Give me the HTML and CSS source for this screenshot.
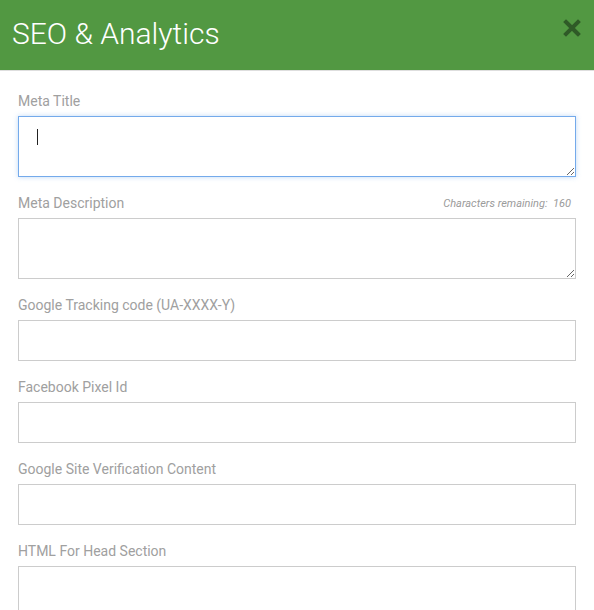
FILE: index.html
```html
<!DOCTYPE html>
<html lang="en">
<head>
    <meta charset="UTF-8">
    <meta name="viewport" content="width=device-width, initial-scale=1.0">
    <title>SEO &amp; Analytics</title>
    <link rel="stylesheet" href="styles.css">
</head>
<body>
    <header class="modal-header">
        <h1 class="modal-title">SEO &amp; Analytics</h1>
        <button class="close-btn" aria-label="Close">
            <svg width="18" height="18" viewBox="0 0 18 18">
                <path d="M3 3 L15 15 M15 3 L3 15" stroke="#2f5a27" stroke-width="4" stroke-linecap="square"/>
            </svg>
        </button>
    </header>

    <div class="modal-body">
        <div class="form-group">
            <label for="meta-title">Meta Title</label>
            <div class="field-wrap">
                <textarea id="meta-title" class="field field-area focused"></textarea>
                
                <span class="caret"></span>
            </div>
        </div>

        <div class="form-group">
            <div class="label-row">
                <label for="meta-description">Meta Description</label>
                <span class="char-count">Characters remaining:&nbsp; 160</span>
            </div>
            <textarea id="meta-description" class="field field-area"></textarea>
        </div>

        <div class="form-group">
            <label for="ga-code">Google Tracking code (UA-XXXX-Y)</label>
            <input type="text" id="ga-code" class="field">
        </div>

        <div class="form-group">
            <label for="fb-pixel">Facebook Pixel Id</label>
            <input type="text" id="fb-pixel" class="field">
        </div>

        <div class="form-group">
            <label for="site-verification">Google Site Verification Content</label>
            <input type="text" id="site-verification" class="field">
        </div>

        <div class="form-group">
            <label for="head-html">HTML For Head Section</label>
            <textarea id="head-html" class="field field-area"></textarea>
        </div>
    </div>
</body>
</html>
```

FILE: styles.css
```css
body {
    margin: 0;
    font-family: Roboto, "Liberation Sans", Arial, sans-serif;
    background-color: #fff;
}

.modal-header {
    display: flex;
    justify-content: space-between;
    align-items: flex-start;
    height: 71px;
    background-color: #529842;
    border-bottom: 1px solid #dedede;
    box-sizing: border-box;
}

.modal-title {
    margin: 0;
    padding: 16px 0 0 12px;
    font-size: 30px;
    font-weight: 300;
    line-height: 36px;
    color: #fff;
}

.close-btn {
    background: none;
    border: none;
    padding: 0;
    margin: 19px 13px 0 0;
    cursor: pointer;
    line-height: 0;
}

.modal-body {
    padding: 20px 18px 0 18px;
}

.form-group {
    margin-bottom: 16px;
}

.label-row {
    display: flex;
    justify-content: space-between;
    align-items: center;
}

label {
    display: block;
    font-size: 14px;
    line-height: 20px;
    color: #a0a0a0;
    margin-bottom: 5px;
}

.char-count {
    font-size: 11px;
    font-style: italic;
    color: #9b9b9b;
    margin: 0 5px 5px 0;
}

.field-wrap {
    position: relative;
}

.field {
    display: block;
    width: 100%;
    height: 41px;
    box-sizing: border-box;
    border: 1px solid #cccccc;
    border-radius: 0;
    padding: 10px 18px;
    font-family: inherit;
    font-size: 14px;
    color: #333;
    background-color: #fff;
    outline: none;
}

.field-area {
    height: 61px;
    resize: vertical;
}

.field:focus,
.field.focused {
    border-color: #74aaeb;
    box-shadow: 0 0 5px rgba(116, 170, 235, 0.45);
}

.caret {
    position: absolute;
    left: 19px;
    top: 13px;
    width: 1px;
    height: 16px;
    background-color: #222;
}
```
